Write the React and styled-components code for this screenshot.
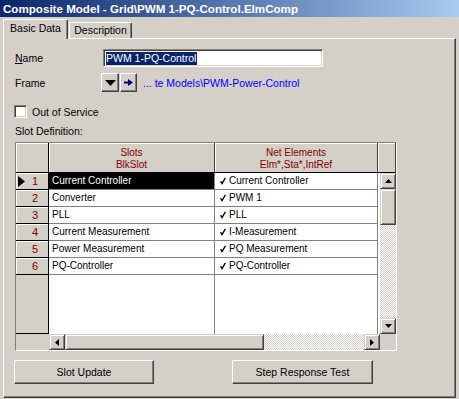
import React from 'react';
import styled, { createGlobalStyle, css } from 'styled-components';

const Global = createGlobalStyle`
  html, body { margin: 0; padding: 0; background: #d4d0c8; }
  body {
    width: 459px; height: 399px; overflow: hidden;
    font-family: "Liberation Sans", Arial, sans-serif; font-size: 10.5px; color: #000;
  }
  * { box-sizing: border-box; }
`;

const raised = css`
  background: #d4d0c8;
  border: 1px solid;
  border-color: #d4d0c8 #404040 #404040 #d4d0c8;
  box-shadow: inset 1px 1px #fff, inset -1px -1px #808080;
`;

const sunken = css`
  background: #fff;
  border: 1px solid;
  border-color: #808080 #fff #fff #808080;
  box-shadow: inset 1px 1px #404040, inset -1px -1px #d4d0c8;
`;

const dither = css`
  background: repeating-conic-gradient(#fff 0 25%, #d4d0c8 0 50%) 0 0 / 2px 2px;
`;

const Window = styled.div`
  width: 459px; height: 399px; background: #d4d0c8;
  display: flex; flex-direction: column; overflow: hidden;
`;

const TitleBar = styled.div`
  height: 17px; flex: none;
  background: linear-gradient(to right, #0a246a 0%, #a6caf0 100%);
  color: #fff; font-weight: bold; font-size: 11.6px; line-height: 17px;
  padding-left: 3px; white-space: nowrap;
`;

const TabStrip = styled.div`
  height: 21px; flex: none; display: flex; align-items: flex-end;
  padding-left: 3px; position: relative; z-index: 1;
`;

const Tab = styled.div`
  width: ${p => p.$w}px;
  height: ${p => (p.$active ? 20 : 16)}px;
  margin-bottom: ${p => (p.$active ? -1 : 0)}px;
  margin-left: ${p => (p.$active ? 0 : 1)}px;
  background: #d4d0c8;
  border-top: 1px solid #fff; border-left: 1px solid #fff;
  border-right: 1px solid #404040;
  box-shadow: inset -1px 0 #808080;
  border-radius: 2px 2px 0 0;
  text-align: center; white-space: nowrap;
  line-height: ${p => (p.$active ? 16 : 14)}px;
`;

const Panel = styled.div`
  flex: none; height: 360px; margin: 0 3px 0 3px;
  border: 1px solid; border-color: #fff #404040 #404040 #fff;
  box-shadow: inset -1px -1px #808080;
  padding-left: 11px;
  display: flex; flex-direction: column;
`;

const FieldRow = styled.div`
  display: flex; align-items: center; height: ${p => p.$h}px;
  margin-top: ${p => p.$mt}px;
`;

const Label = styled.div`
  width: ${p => p.$w}px; flex: none; white-space: nowrap;
  u { text-decoration: underline; }
`;

const TextInput = styled.div`
  ${sunken};
  width: 220px; height: 18px; padding: 1px 0 0 2px;
  display: flex; align-items: center;
`;

const Selected = styled.span`
  background: #0a246a; color: #fff; line-height: 13px; padding: 0 1px 0 0;
  white-space: nowrap;
`;

const SmallBtn = styled.div`
  background: #d4d0c8;
  border: 1px solid;
  border-color: #fff #404040 #404040 #fff;
  box-shadow: inset -1px -1px #808080;
  width: ${p => p.$w}px; height: 19px; margin-right: 1px;
  display: flex; align-items: center; justify-content: center;
`;

const PathText = styled.div`
  color: #0000ff; margin-left: 5px; white-space: nowrap;
`;

const CheckBox = styled.div`
  ${sunken}; width: 13px; height: 13px; margin-left: -1px; margin-right: 5px; flex: none;
`;

const PlainLabel = styled.div`
  line-height: 13px; margin-top: ${p => p.$mt}px; height: 13px; white-space: nowrap;
`;

/* grid */
const GridBox = styled.div`
  width: 382px; margin-top: 4px; flex: none;
  border: 1px solid; border-color: #808080 #fff #fff #808080;
  background: #d4d0c8; display: flex; flex-direction: column;
  font-size: 10px;
`;

const HeaderRow = styled.div`
  display: flex; height: 30px;
`;

const HeadCell = styled.div`
  width: ${p => p.$w}px; height: 30px; flex: none;
  background: #d4d0c8;
  border-right: 1px solid ${p => (p.$black ? '#000' : '#404040')};
  border-bottom: 1px solid #000;
  box-shadow: inset 1px 1px #fff;
  color: #800000; line-height: 12px;
  display: flex; flex-direction: column; align-items: center; justify-content: center;
  padding-top: 3px;
`;

const Body = styled.div`
  display: flex; height: 161px;
`;

const RowHeadCol = styled.div`
  width: 33px; flex: none; background: #d4d0c8;
  border-right: 1px solid #000; border-bottom: 1px solid #000;
  display: flex; flex-direction: column;
`;

const RowHead = styled.div`
  height: 17px; flex: none;
  border-bottom: 1px solid #000;
  box-shadow: inset 1px 1px #fff;
  display: flex; align-items: center; justify-content: flex-end;
  padding: 0 10px 0 2px; color: #800000; font-size: 11px;
  span { margin-left: auto; }
`;

const DataArea = styled.div`
  width: 331px; flex: none; background: #fff; display: flex;
`;

const Column = styled.div`
  width: ${p => p.$w}px; flex: none;
  border-right: 1px solid #808080;
  display: flex; flex-direction: column;
`;

const Cell = styled.div`
  height: 17px; flex: none;
  border-bottom: 1px solid #808080;
  padding-left: ${p => p.$pl}px;
  line-height: 16px; white-space: nowrap; overflow: hidden;
  display: flex; align-items: center;
  background: ${p => (p.$sel ? '#000' : '#fff')};
  color: ${p => (p.$sel ? '#fff' : '#000')};
  svg { margin-right: 3px; flex: none; }
`;

const VScroll = styled.div`
  width: 16px; flex: none; display: flex; flex-direction: column;
`;

const ScrollBtn = styled.div`
  ${raised};
  width: 16px; height: 16px; flex: none;
  display: flex; align-items: center; justify-content: center;
`;

const Thumb = styled.div`
  ${raised};
  flex: none;
  ${p => (p.$vertical ? 'width: 16px;' : 'height: 16px;')}
  ${p => (p.$vertical ? `height: ${p.$size}px;` : `width: ${p.$size}px;`)}
`;

const Trough = styled.div`
  flex: 1; ${dither};
`;

const FooterRow = styled.div`
  display: flex; height: 16px;
`;

const Corner = styled.div`
  width: ${p => p.$w}px; flex: none; background: #d4d0c8;
`;

const HScroll = styled.div`
  width: 331px; flex: none; display: flex;
`;

const ButtonRow = styled.div`
  display: flex; gap: 78px; margin-top: 9px; margin-left: -1px;
`;

const PushButton = styled.div`
  width: ${p => p.$w}px; height: 24px;
  background: #d4d0c8;
  border: 1px solid; border-color: #fff #404040 #404040 #fff;
  box-shadow: inset -1px -1px #808080;
  display: flex; align-items: center; justify-content: center;
  white-space: nowrap; padding-bottom: 1px;
`;

const Tri = ({ dir, w = 7, h = 4, color = '#000' }) => {
  let pts;
  if (dir === 'up') pts = `0,${h} ${w},${h} ${w / 2},0`;
  else if (dir === 'down') pts = `0,0 ${w},0 ${w / 2},${h}`;
  else if (dir === 'left') pts = `${w},0 ${w},${h} 0,${h / 2}`;
  else pts = `0,0 0,${h} ${w},${h / 2}`;
  return (
    <svg width={w} height={h} viewBox={`0 0 ${w} ${h}`} style={{ display: 'block' }}>
      <polygon points={pts} fill={color} />
    </svg>
  );
};

const BlueArrow = () => (
  <svg width="9" height="7" viewBox="0 0 9 7" style={{ display: 'block' }}>
    <rect x="0" y="2.5" width="5" height="2" fill="#000080" />
    <polygon points="4,0 9,3.5 4,7" fill="#000080" />
  </svg>
);

const Check = () => (
  <svg width="6" height="8" viewBox="0 0 6 8" style={{ display: 'block' }}>
    <path d="M0.6 4.2 L2 6.6 L5.4 0.8" stroke="#000" strokeWidth="1.3" fill="none" />
  </svg>
);

const rows = [
  ['Current Controller', 'Current Controller'],
  ['Converter', 'PWM 1'],
  ['PLL', 'PLL'],
  ['Current Measurement', 'I-Measurement'],
  ['Power Measurement', 'PQ Measurement'],
  ['PQ-Controller', 'PQ-Controller'],
];

export default function App() {
  return (
    <Window>
      <Global />
      <TitleBar>Composite Model - Grid\PWM 1-PQ-Control.ElmComp</TitleBar>
      <TabStrip>
        <Tab $active $w={65}>Basic Data</Tab>
        <Tab $w={63}>Description</Tab>
      </TabStrip>
      <Panel>
        <FieldRow $h={18} $mt={10}>
          <Label $w={88}><u>N</u>ame</Label>
          <TextInput><Selected>PWM 1-PQ-Control</Selected></TextInput>
        </FieldRow>
        <FieldRow $h={19} $mt={6}>
          <Label $w={86}>Frame</Label>
          <SmallBtn $w={18}><Tri dir="down" w={11} h={6} /></SmallBtn>
          <SmallBtn $w={17}><BlueArrow /></SmallBtn>
          <PathText>... te Models\PWM-Power-Control</PathText>
        </FieldRow>
        <FieldRow $h={13} $mt={13}>
          <CheckBox />
          <span>Out of Service</span>
        </FieldRow>
        <PlainLabel $mt={7}>Slot Definition:</PlainLabel>
        <GridBox>
          <HeaderRow>
            <HeadCell $w={33} $black />
            <HeadCell $w={166}><div>Slots</div><div>BlkSlot</div></HeadCell>
            <HeadCell $w={163}><div>Net Elements</div><div>Elm*,Sta*,IntRef</div></HeadCell>
            <HeadCell $w={18} />
          </HeaderRow>
          <Body>
            <RowHeadCol>
              {rows.map((r, i) => (
                <RowHead key={i}>
                  {i === 0 && <Tri dir="right" w={7} h={11} />}
                  <span>{i + 1}</span>
                </RowHead>
              ))}
            </RowHeadCol>
            <DataArea>
              <Column $w={166}>
                {rows.map((r, i) => (
                  <Cell key={i} $pl={3} $sel={i === 0}>{r[0]}</Cell>
                ))}
              </Column>
              <Column $w={163}>
                {rows.map((r, i) => (
                  <Cell key={i} $pl={5}><Check />{r[1]}</Cell>
                ))}
              </Column>
            </DataArea>
            <VScroll>
              <ScrollBtn><Tri dir="up" /></ScrollBtn>
              <Thumb $vertical $size={36} />
              <Trough />
              <ScrollBtn><Tri dir="down" /></ScrollBtn>
            </VScroll>
          </Body>
          <FooterRow>
            <Corner $w={33} />
            <HScroll>
              <ScrollBtn><Tri dir="left" w={4} h={7} /></ScrollBtn>
              <Thumb $size={199} />
              <Trough />
              <ScrollBtn><Tri dir="right" w={4} h={7} /></ScrollBtn>
            </HScroll>
            <Corner $w={16} />
          </FooterRow>
        </GridBox>
        <ButtonRow>
          <PushButton $w={140}>Slot Update</PushButton>
          <PushButton $w={141}>Step Response Test</PushButton>
        </ButtonRow>
      </Panel>
    </Window>
  );
}
